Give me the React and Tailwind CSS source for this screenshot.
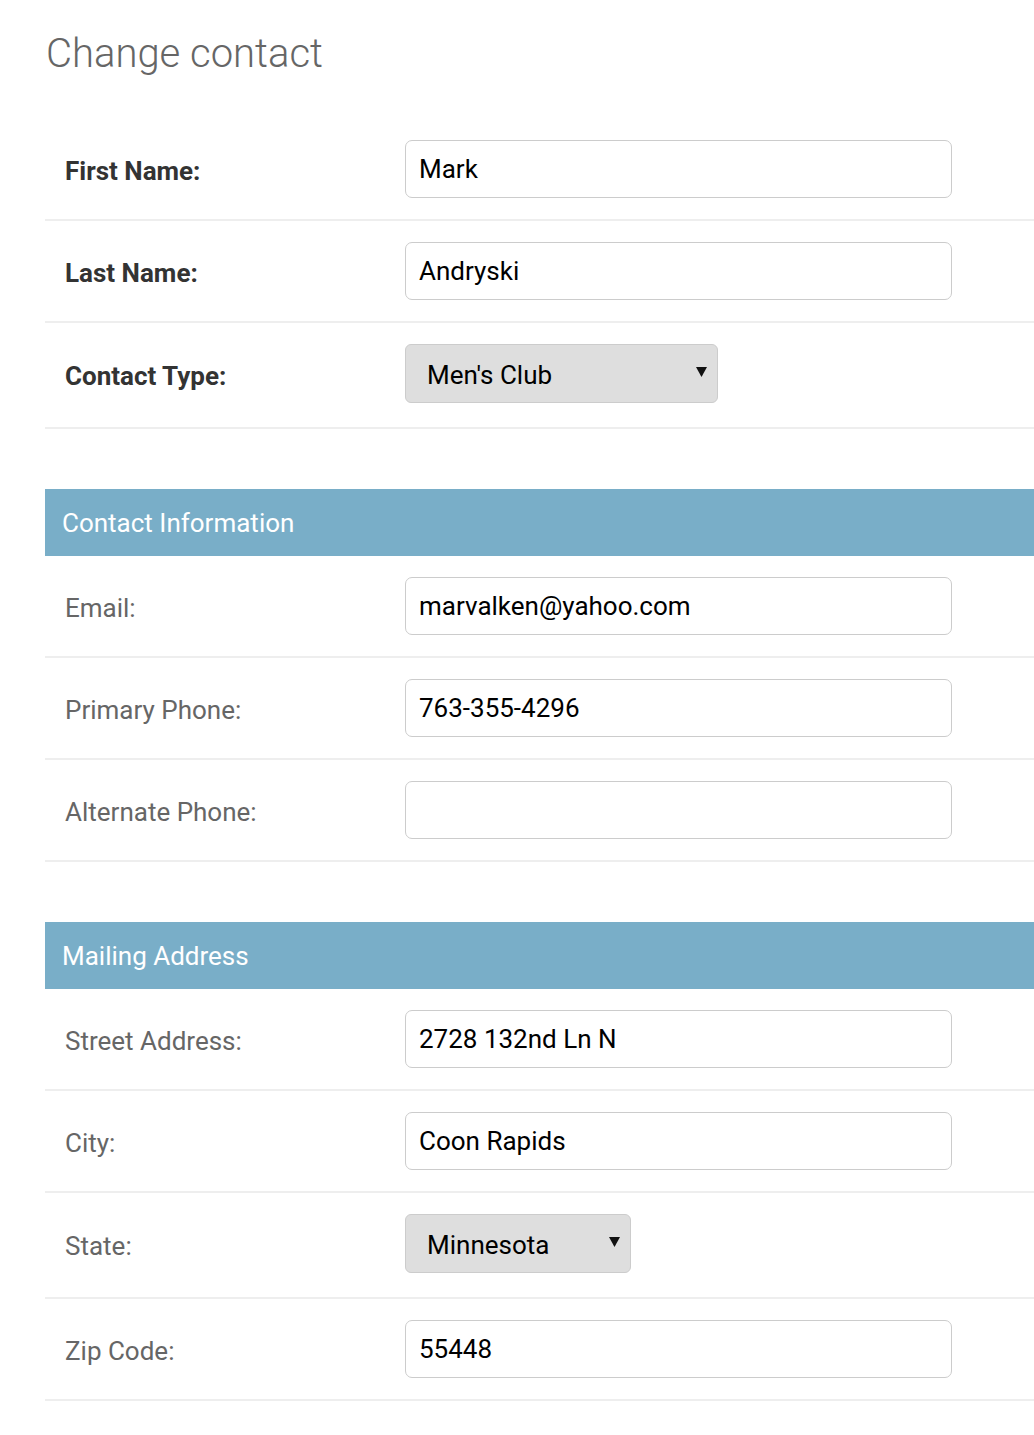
const fieldsets = [
  {
    title: null,
    rows: [
      { label: "First Name:", value: "Mark", required: true },
      { label: "Last Name:", value: "Andryski", required: true },
      { label: "Contact Type:", value: "Men's Club", required: true, select: "w-[313px]" },
    ],
  },
  {
    title: "Contact Information",
    rows: [
      { label: "Email:", value: "marvalken@yahoo.com" },
      { label: "Primary Phone:", value: "763-355-4296" },
      { label: "Alternate Phone:", value: "" },
    ],
  },
  {
    title: "Mailing Address",
    rows: [
      { label: "Street Address:", value: "2728 132nd Ln N" },
      { label: "City:", value: "Coon Rapids" },
      { label: "State:", value: "Minnesota", select: "w-[226px]" },
      { label: "Zip Code:", value: "55448" },
    ],
  },
];

function Row({ row }) {
  return (
    <div
      className={`flex items-center border-b-2 border-[#eeeeee] pl-[20px] pt-[21px] ${
        row.select ? "pb-[24px]" : "pb-[21px]"
      }`}
    >
      <label
        className={`w-[340px] shrink-0 pt-[4px] text-[26px] leading-[30px] ${
          row.required ? "font-bold text-[#333333]" : "text-[#666666]"
        }`}
      >
        {row.label}
      </label>
      {row.select ? (
        <div
          className={`${row.select} h-[59px] flex items-center justify-between rounded-[6px] border border-[#cccccc] bg-[#dedede] pl-[21px] pr-[10px]`}
        >
          <span className="text-[26px] text-black mt-[3px]">{row.value}</span>
          <svg width="11" height="10" viewBox="0 0 11 10" className="-mt-[3px]">
            <path d="M0 0 H11 L5.5 10 Z" fill="#111" />
          </svg>
        </div>
      ) : (
        <div className="w-[547px] h-[58px] flex items-center rounded-[7px] border border-[#cccccc] bg-white px-[13px]">
          <span className="text-[26px] text-black">{row.value}</span>
        </div>
      )}
    </div>
  );
}

export default function App() {
  return (
    <div className="min-h-screen bg-white pl-[45px] pb-[34px] font-['Roboto',sans-serif]">
      <h1 className="pt-[30px] pl-[1px] mb-[41px] text-[40px] leading-[48px] font-light text-[#666666]">
        Change contact
      </h1>
      {fieldsets.map((fs, i) => (
        <div key={i} className={i > 0 ? "mt-[60px]" : ""}>
          {fs.title && (
            <div className="h-[67px] flex items-center bg-[#79aec8] pl-[17px] pt-[2px] text-[26px] text-white">
              {fs.title}
            </div>
          )}
          {fs.rows.map((row) => (
            <Row key={row.label} row={row} />
          ))}
        </div>
      ))}
    </div>
  );
}
